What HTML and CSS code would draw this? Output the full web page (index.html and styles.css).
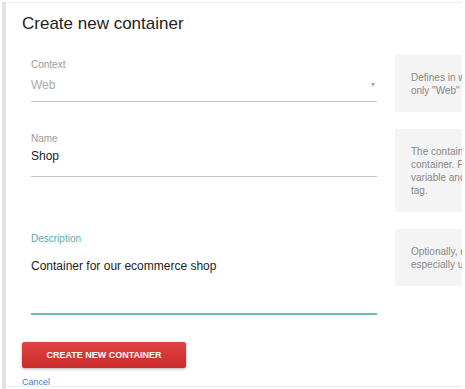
FILE: index.html
```html
<!DOCTYPE html>
<html lang="en">

<head>
    <meta charset="UTF-8">
    <meta name="viewport" content="width=device-width, initial-scale=1.0">
    <title>Create new container</title>
    <link rel="stylesheet" href="styles.css">
</head>

<body>
    <div class="page">
        <div class="card">
            <h2 class="title">Create new container</h2>

            <div class="form">
                <!-- Context -->
                <div class="row">
                    <div class="field">
                        <label class="label">Context</label>
                        <div class="input input-select">
                            <span class="value value-disabled">Web</span>
                            <span class="caret"></span>
                        </div>
                    </div>
                    <div class="help">
                        Defines in which context this container is used. Currently<br>
                        only "Web" is supported.
                    </div>
                </div>

                <!-- Name -->
                <div class="row">
                    <div class="field">
                        <label class="label">Name</label>
                        <div class="input input-name">
                            <span class="value">Shop</span>
                        </div>
                    </div>
                    <div class="help">
                        The container name is shown in the list of each<br>
                        container. For example use the name of your site. A<br>
                        variable and trigger can then be added to each<br>
                        tag.
                    </div>
                </div>

                <!-- Description -->
                <div class="row">
                    <div class="field">
                        <label class="label label-active">Description</label>
                        <div class="input input-area">
                            <span class="value">Container for our ecommerce shop</span>
                        </div>
                    </div>
                    <div class="help">
                        Optionally, describe what this container is used for,<br>
                        especially useful when you manage many containers.
                    </div>
                </div>
            </div>

            <div class="actions">
                <a href="#" class="btn">CREATE NEW CONTAINER</a>
                <a href="#" class="cancel">Cancel</a>
            </div>
        </div>
    </div>
</body>

</html>
```

FILE: styles.css
```css
body {
    font-family: 'Liberation Sans', Arial, sans-serif;
    margin: 0;
    padding: 0;
    background-color: #fff;
    color: #222;
}

.page {
    margin-left: 2px;
    width: 456px;
    height: 389px;
    border-left: 4px solid #e3e3e3;
}

.card {
    box-sizing: border-box;
    margin-top: 2px;
    height: 385px;
    border-top: 1px solid #eeeeee;
    border-bottom: 1px solid #eeeeee;
    padding: 11px 0 0 16px;
    overflow: hidden;
}

.title {
    margin: 0 0 21px 0;
    font-size: 17px;
    line-height: 20px;
    font-weight: normal;
    color: #222;
}

.form {
    padding-left: 9px;
}

.row {
    display: grid;
    grid-template-columns: 346px 270px;
    column-gap: 18px;
    align-items: start;
    margin-bottom: 17px;
}

.row:last-child {
    margin-bottom: 0;
}

.field {
    padding-top: 3px;
}

.label {
    display: block;
    font-size: 10px;
    line-height: 13px;
    color: #9a9a9a;
}

.label-active {
    color: #5ea9a9;
}

.input {
    display: flex;
    align-items: center;
    justify-content: space-between;
    font-size: 12px;
    line-height: 16px;
    border-bottom: 1px solid #c4c4c4;
}

.input-select {
    margin-top: 6px;
    padding: 0 2px 8px 0;
}

.input-name {
    margin-top: 3px;
    padding-bottom: 12px;
}

.input-area {
    align-items: flex-start;
    margin-top: 13px;
    padding-bottom: 39px;
    border-bottom: 2px solid #69bdb9;
}

.value {
    color: #222;
}

.value-disabled {
    color: #aaa;
}

.caret {
    width: 0;
    height: 0;
    border-left: 2.5px solid transparent;
    border-right: 2.5px solid transparent;
    border-top: 4px solid #aaa;
}

.help {
    box-sizing: border-box;
    background-color: #f4f4f4;
    padding: 16px 16px 15px 16px;
    font-size: 10px;
    line-height: 13px;
    color: #888;
    white-space: nowrap;
}

.actions {
    margin-top: 27px;
}

.btn {
    display: inline-block;
    width: 164px;
    height: 26px;
    line-height: 26px;
    text-align: center;
    background: linear-gradient(#e14341, #c92a2a);
    color: #fff;
    font-size: 9px;
    font-weight: 700;
    text-decoration: none;
    border-radius: 2px;
    box-shadow: 0 1px 3px rgba(0, 0, 0, 0.3);
}

.cancel {
    display: block;
    margin-top: 8px;
    font-size: 9px;
    line-height: 12px;
    color: #3e7bc4;
    text-decoration: none;
}
```
